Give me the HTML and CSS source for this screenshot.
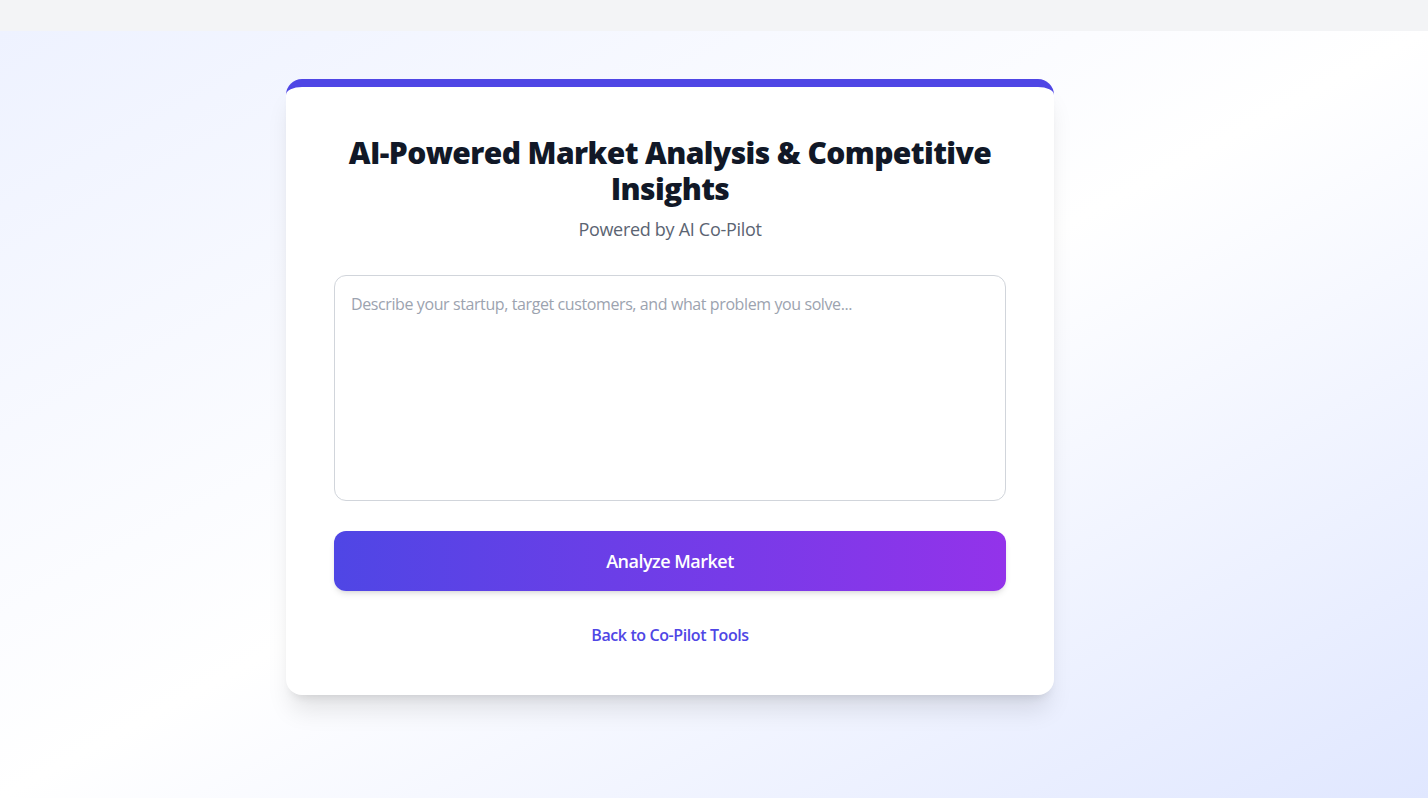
FILE: index.html
```html
<!DOCTYPE html>
<html lang="en">
<head>
<meta charset="utf-8">
<title>AI-Powered Market Analysis</title>
<link rel="stylesheet" href="styles.css">
</head>
<body>
<header class="topbar"></header>
<main class="main">
  <section class="card">
    <h1 class="title">AI-Powered Market Analysis &amp; Competitive Insights</h1>
    <p class="subtitle">Powered by AI Co-Pilot</p>
    <textarea class="input" placeholder="Describe your startup, target customers, and what problem you solve..."></textarea>
    <button class="btn" type="button">Analyze Market</button>
    <div class="back"><a href="#" class="back-link">Back to Co-Pilot Tools</a></div>
  </section>
</main>
</body>
</html>
```

FILE: styles.css
```css
* { box-sizing: border-box; }
html, body { margin: 0; padding: 0; }
body {
  font-family: "Open Sans", "Noto Sans", "Liberation Sans", sans-serif;
  color: #111827;
  height: 798px;
  display: flex;
  flex-direction: column;
  overflow: hidden;
}
.topbar {
  height: 31px;
  background: #f3f4f6;
  flex: none;
}
.main {
  flex: 1;
  background: linear-gradient(to bottom right, #eef2ff, #ffffff, #e0e7ff);
  display: flex;
  justify-content: center;
  align-items: flex-start;
  padding: 48px 88px 0 0;
}
.card {
  width: 768px;
  background: #ffffff;
  border-top: 8px solid #4f46e5;
  border-radius: 16px;
  padding: 48px;
  box-shadow: 0 20px 25px -5px rgba(0,0,0,0.1), 0 8px 10px -6px rgba(0,0,0,0.1);
  display: flex;
  flex-direction: column;
}
.title {
  margin: 0;
  font-size: 30px;
  line-height: 36px;
  font-weight: 800;
  text-align: center;
  color: #111827;
  letter-spacing: -0.6px;
}
.subtitle {
  margin: 8px 0 0;
  font-size: 18px;
  line-height: 28px;
  text-align: center;
  color: #5b6472;
  letter-spacing: -0.3px;
}
.input {
  margin-top: 32px;
  height: 226px;
  width: 100%;
  border: 1px solid #d1d5db;
  border-radius: 12px;
  padding: 16px;
  font-family: inherit;
  font-size: 16px;
  line-height: 24px;
  letter-spacing: -0.4px;
  resize: none;
  outline: none;
  color: #111827;
}
.input::placeholder { color: #9ca3af; }
.btn {
  margin-top: 30px;
  height: 60px;
  width: 100%;
  border: none;
  border-radius: 12px;
  background: linear-gradient(to right, #4f46e5, #9333ea);
  color: #ffffff;
  font-family: inherit;
  font-size: 18px;
  font-weight: 600;
  letter-spacing: -0.5px;
  box-shadow: 0 4px 6px -1px rgba(0,0,0,0.1), 0 2px 4px -2px rgba(0,0,0,0.1);
  cursor: pointer;
}
.back {
  margin-top: 32px;
  text-align: center;
  line-height: 24px;
}
.back-link {
  color: #4f46e5;
  font-size: 16px;
  font-weight: 600;
  letter-spacing: -0.4px;
  text-decoration: none;
}
```
